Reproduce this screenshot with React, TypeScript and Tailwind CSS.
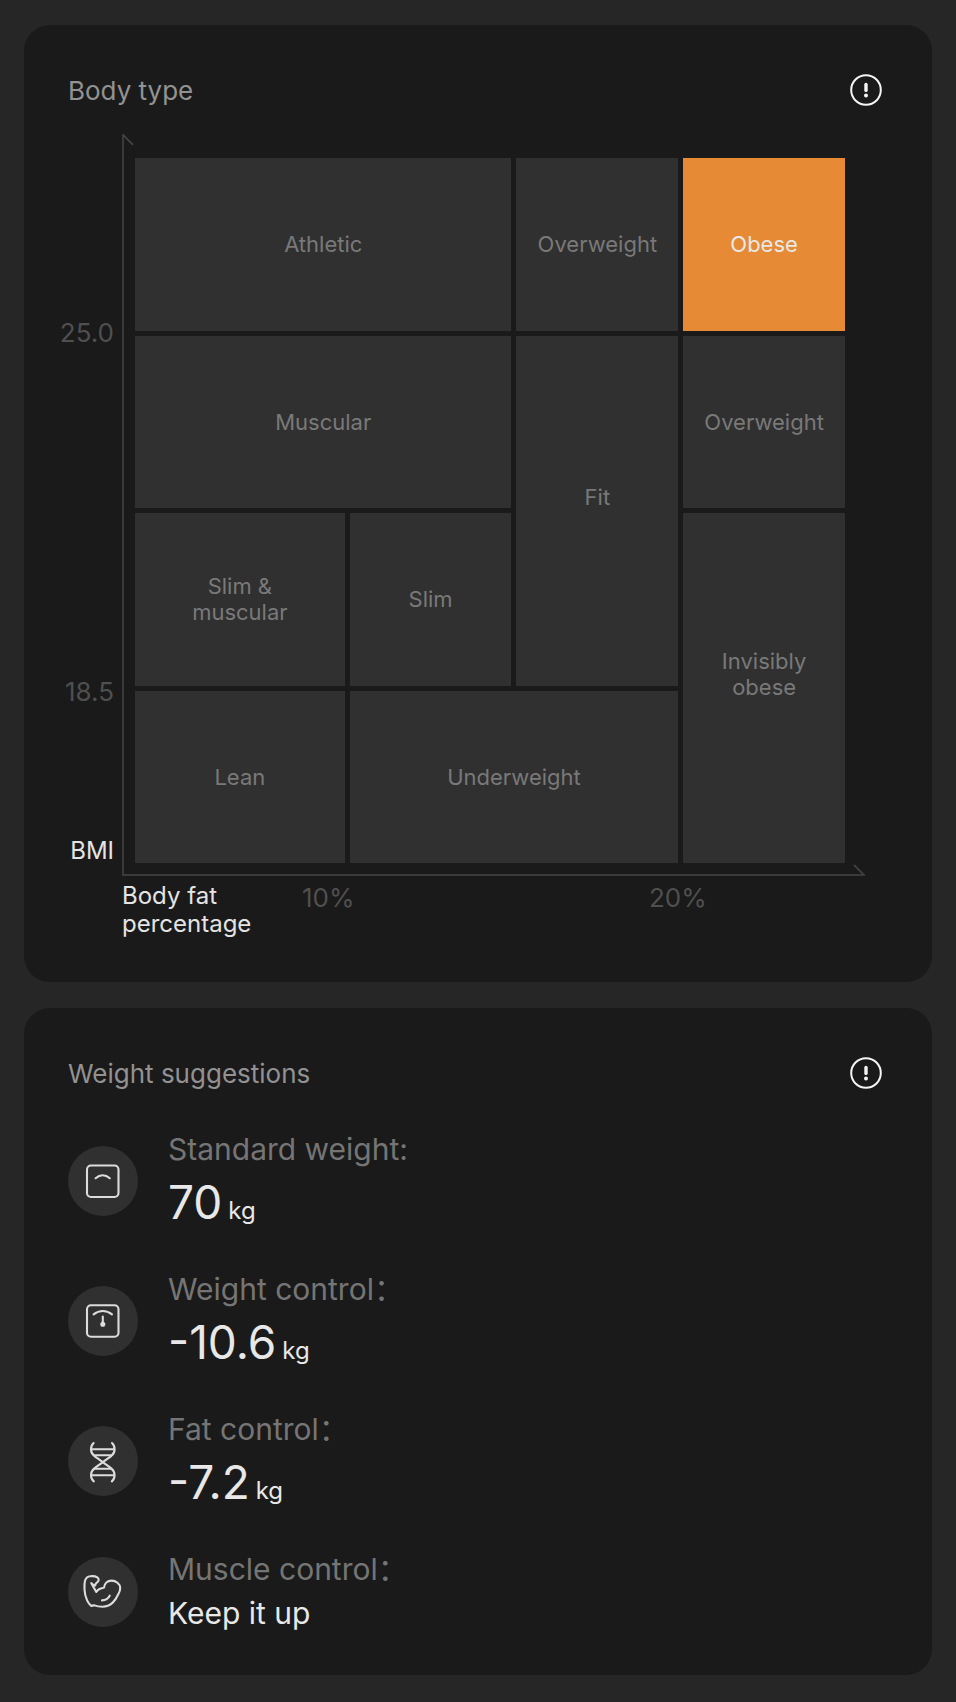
import type { ReactNode } from "react";

const bodyTypes = [
    { label: "Athletic", area: "col-span-2" },
    { label: "Overweight", area: "" },
    { label: "Obese", area: "", active: true },
    { label: "Muscular", area: "col-span-2" },
    { label: "Fit", area: "row-span-2 pb-7" },
    { label: "Overweight", area: "" },
    { label: "Slim & muscular", area: "px-10" },
    { label: "Slim", area: "" },
    { label: "Invisibly obese", area: "row-span-2 px-6 pb-7" },
    { label: "Lean", area: "" },
    { label: "Underweight", area: "col-span-2" },
];

function InfoIcon() {
    return (
        <svg viewBox="0 0 32 32" className="size-8" fill="none" aria-hidden="true">
            <circle cx="16" cy="16" r="14.8" stroke="#f5f5f5" strokeWidth="2" />
            <path d="M16 10.4v6" stroke="#f5f5f5" strokeWidth="3.4" strokeLinecap="round" />
            <circle cx="16" cy="21.4" r="2" fill="#f5f5f5" />
        </svg>
    );
}

function Card({ title, children }: { title: string; children: ReactNode }) {
    return (
        <section className="rounded-[26px] bg-[#1a1a1a] pt-12">
            <header className="flex items-center justify-between pl-11 pr-[50px]">
                <h2 className="pt-0.5 text-[26px] leading-8 text-[#929292]">{title}</h2>
                <button type="button" aria-label={`About ${title}`} className="rounded-full">
                    <InfoIcon />
                </button>
            </header>
            {children}
        </section>
    );
}

function IconCircle({ children }: { children: ReactNode }) {
    return (
        <div className="size-[70px] shrink-0 rounded-full bg-[#303030]">
            <svg
                viewBox="0 0 70 70"
                fill="none"
                stroke="#dcdcdc"
                strokeWidth="2.1"
                strokeLinecap="round"
                strokeLinejoin="round"
                aria-hidden="true"
            >
                {children}
            </svg>
        </div>
    );
}

const suggestions = [
    {
        label: "Standard weight:",
        value: "70",
        icon: (
            <>
                <rect x="19" y="19.5" width="31.5" height="31.5" rx="4" />
                <path d="M27.6 32.2c4.4-3.9 9.8-3.9 14.2 0" />
            </>
        ),
    },
    {
        label: "Weight control：",
        value: "-10.6",
        icon: (
            <>
                <rect x="19" y="19.2" width="31.5" height="31.5" rx="4" />
                <path d="M25.6 28.4c5.6-4.6 12.8-4.6 18.4 0M34.8 30.6v7" />
                <circle cx="34.8" cy="38.2" r="1.5" fill="#dcdcdc" />
            </>
        ),
    },
    {
        label: "Fat control：",
        value: "-7.2",
        icon: (
            <>
                <path d="M25.6 17c-3.6 3.4-3.6 9.400.6 12.800 2.600 2 5.600 4.200 8.600 6.400 2.800 2.200 5.800 4 8.400 6.200 4.400 3.600 4.400 9.600.6 13" />
                <path d="M44 17c3.600 3.400 3.600 9.400-.6 12.800-2.600 2-5.600 4.200-8.600 6.400-2.800 2.200-5.800 4-8.400 6.200-4.400 3.600-4.400 9.600-.6 13" />
                <path d="M24 23.300h21.600M26.600 29.300h16.400M26.600 42.800h16.400M24 49.300h21.600" />
            </>
        ),
    },
    {
        label: "Muscle control：",
        note: "Keep it up",
        icon: (
            <path d="M23.3 26.2L28.3 35C29.400 33.500 30.600 32.400 32 31.800C33.300 31.200 34.700 31.200 36 30.600C36.400 26.500 39.500 23.600 43.600 23.600C47.800 23.600 52.200 27 52.200 31C52.200 33.600 51.600 35 50.400 37C49 40 47.400 43.200 44.700 45.600C41.600 48.400 38.400 49.700 34.600 49.700C31.600 49.700 29 49.400 26.500 48.400C25.400 48.200 24.300 48.500 23.300 49C21.600 47.400 20.200 45.800 19.200 43.600C17.600 40 16.600 36.500 16.500 32.500C16.400 29.500 16.300 26.500 17 23.800C17.700 21.200 19.600 19.400 22.400 19.200C25 19 27.600 19.200 29.300 20.400C31.200 21.800 31 23.800 29.500 25C28.200 26 27 26.600 27.300 28.400C25.600 28.200 24.200 27.400 23.300 26.200ZM34 43.400C37.400 43.200 40.200 41.600 41.700 38.700" />
        ),
    },
];

export default function App() {
    return (
        <main className="flex min-h-screen flex-col gap-[26px] bg-[#262626] px-6 pt-[25px] pb-[26px] font-['Inter',sans-serif]">

            {/* Body type chart */}
            <Card title="Body type">
                <div className="mt-[27px] grid grid-cols-[98px_1fr] pr-[67px] pb-[42px]">

                    {/* BMI axis */}
                    <div className="flex flex-col pr-2 text-right text-[26px] leading-8 text-[#4f4f4f]">
                        <span className="mt-[183px]">25.0</span>
                        <span className="mt-[327px]">18.5</span>
                        <span className="mt-[127px] text-2xl text-[#e4e4e4]">BMI</span>
                    </div>

                    <div className="relative border-b-2 border-l-2 border-[#3a3a3a] pt-6 pr-5 pb-[11px] pl-[11px]">
                        <svg viewBox="0 0 12 12" className="absolute top-0 -left-0.5 size-3" fill="none" aria-hidden="true">
                            <path d="M1 .8l10 10" stroke="#444444" strokeWidth="1.8" />
                        </svg>
                        <svg viewBox="0 0 12 12" className="absolute right-0 -bottom-0.5 size-3" fill="none" aria-hidden="true">
                            <path d="M1 1l10 10" stroke="#3f3f3f" strokeWidth="1.8" />
                        </svg>

                        <div className="grid h-[705px] grid-cols-[210fr_162fr_162fr_162fr] grid-rows-4 gap-[5px]">
                            {bodyTypes.map((type, i) => (
                                <div
                                    key={i}
                                    className={`flex items-center justify-center text-center text-[22px] leading-[26px] ${type.area} ${
                                        type.active ? "bg-[#e68a35] text-[#e8e8e8]" : "bg-[#303030] text-[#797979]"
                                    }`}
                                >
                                    {type.label}
                                </div>
                            ))}
                        </div>
                    </div>

                    {/* Body fat axis */}
                    <div className="col-start-2 grid grid-cols-[180fr_347fr_216fr] pt-1.5 text-[26px] leading-8 text-[#4f4f4f]">
                        <span className="text-2xl leading-7 text-[#e4e4e4]">
                            Body fat
                            <br />
                            percentage
                        </span>
                        <span className="h-[58px]">10%</span>
                        <span>20%</span>
                    </div>
                </div>
            </Card>

            {/* Weight suggestions */}
            <Card title="Weight suggestions">
                <ul className="mt-[38px] flex flex-col gap-[34px] px-11 pb-[39px]">
                    {suggestions.map((item) => (
                        <li key={item.label} className="flex items-center gap-[30px]">
                            <IconCircle>{item.icon}</IconCircle>
                            <div className="text-[#e8e8e8]">
                                <p className="font-['Inter','Noto_Sans_CJK_SC',sans-serif] text-3xl leading-[42px] text-[#757575]">
                                    {item.label}
                                </p>
                                {item.value ? (
                                    <p className="flex items-baseline gap-1.5 text-[46px] leading-[64px]">
                                        {item.value}
                                        <span className="text-2xl">kg</span>
                                    </p>
                                ) : (
                                    <p className="text-3xl leading-[46px]">{item.note}</p>
                                )}
                            </div>
                        </li>
                    ))}
                </ul>
            </Card>
        </main>
    );
}
